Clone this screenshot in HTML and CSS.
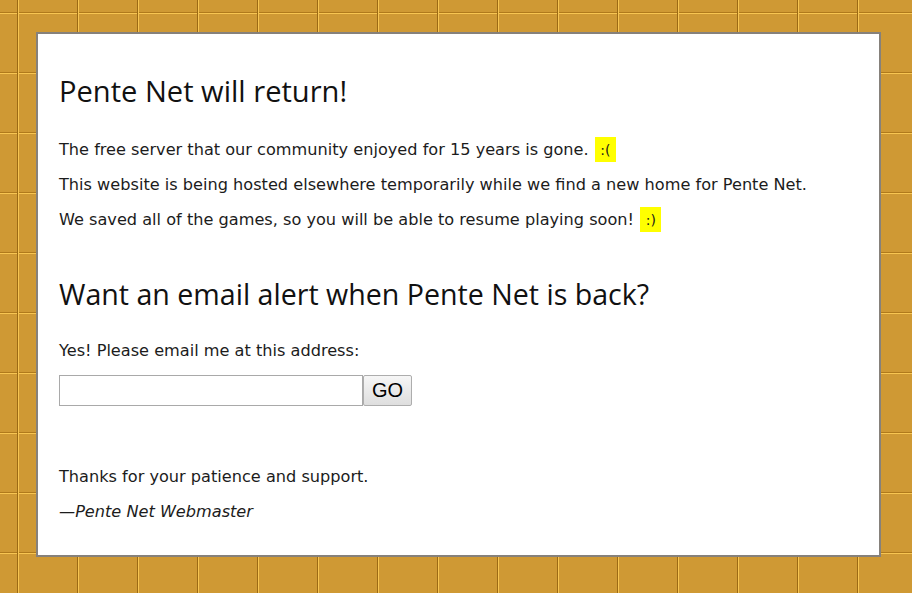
FILE: index.html
```html
<!DOCTYPE html>
<html>
<head>
<meta charset="utf-8">
<title>Pente Net will return!</title>
<link rel="stylesheet" href="styles.css">
</head>
<body>
<main class="card">
  <h1 class="title">Pente Net will return!</h1>
  <p class="line">The free server that our community enjoyed for 15 years is gone. <span class="mark">:(</span></p>
  <p class="line">This website is being hosted elsewhere temporarily while we find a new home for Pente Net.</p>
  <p class="line">We saved all of the games, so you will be able to resume playing soon! <span class="mark">:)</span></p>
  <h2 class="title sub">Want an email alert when Pente Net is back?</h2>
  <p class="line ask">Yes! Please email me at this address:</p>
  <form class="signup">
    <input class="email" type="text">
    <button class="go" type="button">GO</button>
  </form>
  <p class="line thanks">Thanks for your patience and support.</p>
  <p class="line sign">—Pente Net Webmaster</p>
</main>
</body>
</html>
```
FILE: styles.css
```css
html, body {
  margin: 0;
  padding: 0;
}
body {
  height: 593px;
  overflow: hidden;
  background-color: #cf9934;
  background-image:
    linear-gradient(to right, #9c6a14 0 1px, #f7c552 1px 2px, transparent 2px),
    linear-gradient(to bottom, #b07a1c 0 1px, #f7c552 1px 2px, transparent 2px);
  background-size: 60px 60px, 60px 60px;
  background-position: 17px 0, 0 12px;
  font-family: "DejaVu Sans", Verdana, sans-serif;
  color: #1c1c1c;
}
.card {
  box-sizing: border-box;
  width: 845px;
  height: 525px;
  margin: 32px 0 0 36px;
  background: #fff;
  border: 2px solid #86817b;
  padding: 37px 21px 0 21px;
  display: flex;
  flex-direction: column;
  align-items: flex-start;
}
.title {
  margin: 0;
  font-family: "Open Sans", sans-serif;
  font-weight: 400;
  font-size: 29.1px;
  line-height: 40px;
  color: #111;
}
.sub {
  margin-top: 37.5px;
  font-size: 28.6px;
}
.line {
  margin: 0;
  font-size: 16.15px;
  line-height: 35px;
}
.line:first-of-type {
  margin-top: 20.5px;
}
.mark {
  background: #ffff00;
  font-size: 14px;
  line-height: 1;
  padding: 5px 5.5px 4px;
  margin-left: 1px;
}
.ask {
  margin-top: 18.5px;
}
.signup {
  display: flex;
  margin-top: 7.5px;
}
.email {
  box-sizing: border-box;
  width: 304px;
  height: 31px;
  margin: 0;
  border: 1px solid #a9a9a9;
  padding: 2px 4px;
  font-size: 16px;
}
.go {
  box-sizing: border-box;
  width: 49px;
  height: 31px;
  margin: 0;
  border: 1px solid #adadad;
  border-radius: 2px;
  background: linear-gradient(#f6f6f6, #dedede);
  font-family: "Liberation Sans", Arial, sans-serif;
  font-size: 20px;
  color: #000;
  padding: 0;
}
.thanks {
  margin-top: 52.5px;
}
.sign {
  font-style: italic;
}
```
